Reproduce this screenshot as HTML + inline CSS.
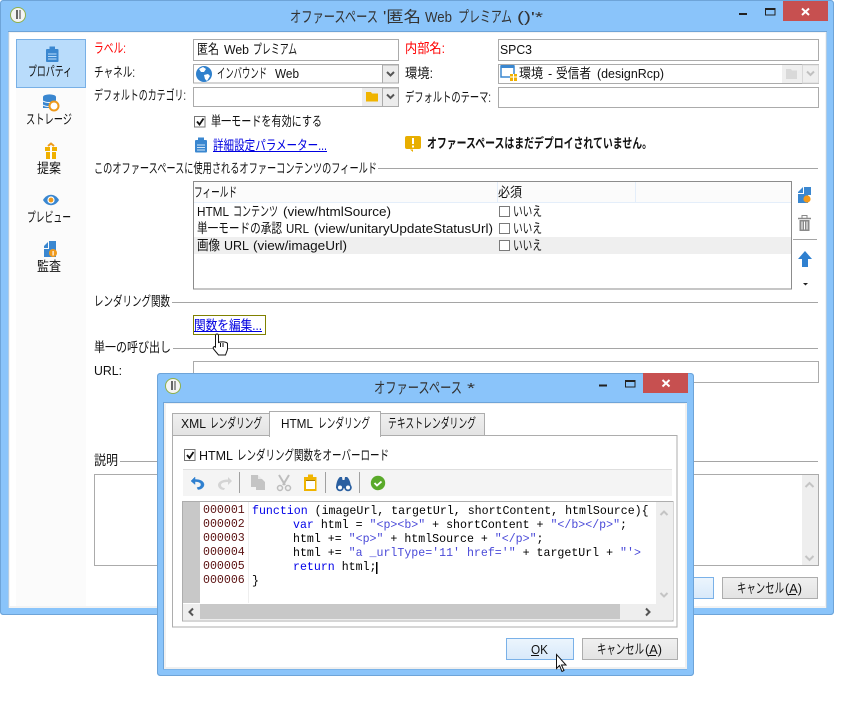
<!DOCTYPE html>
<html><head><meta charset="utf-8">
<style>
html,body{margin:0;padding:0;background:#fff;width:850px;height:701px;overflow:hidden}
svg{display:block;position:absolute;left:0;top:0}
text{font-family:"Liberation Sans","Noto Sans CJK JP",sans-serif;font-size:13.5px;fill:#111;white-space:pre}
.l{font-size:12.5px}
.m{font-family:"Liberation Mono",monospace;font-size:11.6px;fill:#000}
.n{font-family:"Liberation Mono",monospace;font-size:11.6px;fill:#5a1010}
.k{fill:#0000e8}.s{fill:#4a4ad8}
.ti{font-size:15.5px;fill:#333}
.tl{font-size:14.5px;fill:#333}
.inp{fill:#fff;stroke:#ababab;stroke-width:1}
.ln{stroke:#a5a5a5;stroke-width:1}
.btn{stroke:#adadad;stroke-width:1}
</style></head><body>
<svg width="850" height="701" viewBox="0 0 850 701" xmlns="http://www.w3.org/2000/svg">
<defs>
<linearGradient id="g1" x1="0" y1="0" x2="0" y2="1"><stop offset="0" stop-color="#f0f0f0"/><stop offset="1" stop-color="#e3e3e3"/></linearGradient>
<linearGradient id="g2" x1="0" y1="0" x2="0" y2="1"><stop offset="0" stop-color="#ecf5fd"/><stop offset="1" stop-color="#d8e9fa"/></linearGradient>
</defs>
<!-- main window -->
<rect x="0" y="0" width="834" height="615" rx="3" fill="#8ac4fa"/>
<rect x="0.5" y="0.5" width="833" height="614" rx="3" fill="none" stroke="#6ea4d8"/>
<rect x="8" y="31" width="819" height="577" fill="#6ea4d8"/>
<rect x="8.5" y="32" width="818" height="576" fill="#f3f3f3"/>
<rect x="10" y="33" width="815" height="573" fill="#fff"/>
<rect x="16" y="39" width="70" height="567" fill="#fbfbfb"/>
<rect x="16.5" y="39.5" width="69" height="48" fill="#b9dcfb" stroke="#78b0e6"/>
<!-- titlebar -->
<circle cx="18" cy="15" r="7.5" fill="#f4f4f4" stroke="#8fb04a"/>
<rect x="16" y="10" width="2" height="9" fill="#666"/><rect x="19" y="10" width="2" height="9" fill="#999"/>
<text class="ti" x="290" y="22" textLength="88" lengthAdjust="spacingAndGlyphs">オファースペース</text>
<text class="ti" x="383" y="22" textLength="38" lengthAdjust="spacingAndGlyphs">'匿名</text>
<text class="tl" x="425" y="22" textLength="27" lengthAdjust="spacingAndGlyphs">Web</text>
<text class="ti" x="458" y="22" textLength="54" lengthAdjust="spacingAndGlyphs">プレミアム</text>
<text class="tl" x="517" y="22" textLength="26" lengthAdjust="spacingAndGlyphs">()'*</text>
<rect x="739" y="13" width="8" height="2" fill="#222"/>
<rect x="765.5" y="8.5" width="9.5" height="6.5" fill="none" stroke="#222"/><rect x="765" y="8" width="10.5" height="2" fill="#222"/>
<rect x="783" y="1" width="45" height="20" fill="#c75050"/>
<path d="M802 8.500l7 6.500M809 8.500l-7 6.500" stroke="#fff" stroke-width="2"/>
<!-- sidebar -->
<g>
<rect x="46" y="49" width="12.500" height="13" rx="1" fill="#3a87d0"/><rect x="49.500" y="46.500" width="5.500" height="4" fill="#3a87d0"/>
<path d="M48 54h8.500M48 56.500h8.500M48 59h8.500" stroke="#b9dcfb"/>
<text x="28" y="76" textLength="44" lengthAdjust="spacingAndGlyphs">プロパティ</text>
<ellipse cx="49.500" cy="97" rx="6.500" ry="2.600" fill="#3a87d0"/><rect x="43" y="97" width="13" height="11" fill="#3a87d0"/><path d="M43 101c3 2 10 2 13 0M43 105c3 2 10 2 13 0" stroke="#fff" fill="none"/>
<circle cx="54" cy="106" r="4.500" fill="#fff" stroke="#ee9a1c" stroke-width="2"/>
<text x="26" y="124" textLength="46" lengthAdjust="spacingAndGlyphs">ストレージ</text>
<rect x="45" y="147" width="12" height="4" fill="#f0b000"/><rect x="46" y="152" width="10" height="7" fill="#f0b000"/><rect x="50" y="147" width="2" height="12" fill="#fff"/><path d="M48 146l3-2.500 3 2.500" fill="none" stroke="#ee9a1c" stroke-width="2"/>
<text x="37" y="173" textLength="24" lengthAdjust="spacingAndGlyphs">提案</text>
<path d="M43 200c4-7 12-7 16 0c-4 7-12 7-16 0z" fill="#3a87d0"/><circle cx="51" cy="200" r="3.600" fill="#fff"/><circle cx="51" cy="200" r="2.400" fill="#f09a1c"/>
<text x="27" y="222" textLength="44" lengthAdjust="spacingAndGlyphs">プレビュー</text>
<path d="M44 246l4-4v6h-4zM49 241h7v16h-12v-8h5z" fill="#3a87d0"/><circle cx="53" cy="253" r="4" fill="#f09a1c"/><rect x="52.500" y="251" width="1.200" height="4.500" fill="#fff"/>
<text x="37" y="271" textLength="24" lengthAdjust="spacingAndGlyphs">監査</text>
</g>
<!-- form left -->
<text x="94" y="53" textLength="32" lengthAdjust="spacingAndGlyphs" style="fill:#f00">ラベル:</text>
<text x="94" y="77" textLength="41" lengthAdjust="spacingAndGlyphs">チャネル:</text>
<text x="94" y="100" textLength="92" lengthAdjust="spacingAndGlyphs">デフォルトのカテゴリ:</text>
<rect class="inp" x="193.500" y="39.500" width="205" height="21"/>
<text x="197" y="54" textLength="22" lengthAdjust="spacingAndGlyphs">匿名</text>
<text class="l" x="224" y="54" textLength="25" lengthAdjust="spacingAndGlyphs">Web</text>
<text x="253" y="54" textLength="44" lengthAdjust="spacingAndGlyphs">プレミアム</text>
<rect class="inp" x="193.500" y="64.500" width="205" height="18.500"/>
<rect x="382.500" y="65" width="16" height="18" fill="#ececec" stroke="#ababab"/>
<path d="M387 72l3.500 3.500 3.500-3.500" fill="none" stroke="#555" stroke-width="2"/>
<circle cx="204" cy="74" r="8" fill="#2f80cc"/><path d="M199 69l4-2 3 2-2 3-3 0zM204 75l4-1 2 2-3 5-2-2z" fill="#fff"/>
<text x="217" y="78" textLength="50" lengthAdjust="spacingAndGlyphs">インバウンド</text>
<text class="l" x="275" y="78" textLength="24" lengthAdjust="spacingAndGlyphs">Web</text>
<rect class="inp" x="193.500" y="87.500" width="205" height="19"/>
<rect x="362" y="88" width="20" height="18" fill="#ececec"/>
<rect x="382.500" y="88" width="16" height="18.500" fill="#ececec" stroke="#ababab"/>
<path d="M387 94.500l3.500 3.500 3.500-3.500" fill="none" stroke="#555" stroke-width="2"/>
<path d="M366 92h5l1 1.500h6v8h-12z" fill="#f0b400"/>
<rect x="194.500" y="116.500" width="10.500" height="10.500" fill="#fff" stroke="#777"/>
<path d="M197 121.500l2.500 3 4-6" fill="none" stroke="#111" stroke-width="1.800"/>
<text x="211" y="126" textLength="111" lengthAdjust="spacingAndGlyphs">単一モードを有効にする</text>
<rect x="195" y="140" width="12" height="12.500" rx="1" fill="#3a87d0"/><rect x="198" y="137.500" width="6" height="4" fill="#3a87d0"/><path d="M197 145h8M197 147.500h8M197 150h8" stroke="#cfe4f8"/>
<text x="213" y="150" textLength="114" lengthAdjust="spacingAndGlyphs" style="fill:#0000e0">詳細設定パラメーター...</text>
<rect x="213" y="151" width="114" height="1" fill="#0000e0"/>
<rect x="405" y="136" width="16" height="13" rx="2" fill="#e8ae00"/><path d="M410 149.500l3 2.500 0-2.500z" fill="#e8ae00"/><rect x="412" y="138" width="2" height="6" fill="#fff"/><rect x="412" y="145.500" width="2" height="2" fill="#fff"/>
<text x="427" y="148" textLength="225" lengthAdjust="spacingAndGlyphs" style="font-weight:bold">オファースペースはまだデプロイされていません。</text>
<!-- form right -->
<text x="405" y="53" textLength="40" lengthAdjust="spacingAndGlyphs" style="fill:#f00">内部名:</text>
<text x="405" y="78" textLength="28" lengthAdjust="spacingAndGlyphs">環境:</text>
<text x="405" y="102" textLength="86" lengthAdjust="spacingAndGlyphs">デフォルトのテーマ:</text>
<rect class="inp" x="498.500" y="39.500" width="320" height="21"/>
<text class="l" x="500" y="54" textLength="32" lengthAdjust="spacingAndGlyphs">SPC3</text>
<rect class="inp" x="498.500" y="64.500" width="320" height="19"/>
<rect x="782" y="65" width="20" height="18" fill="#efefef"/>
<rect x="802.500" y="65" width="16" height="18" fill="#efefef" stroke="#d8d8d8"/>
<path d="M807 71.500l3.500 3.500 3.500-3.500" fill="none" stroke="#c0c0c0" stroke-width="2"/>
<path d="M786 69h5l1 1.500h5v8.500h-11z" fill="#d9d9d9"/>
<rect x="501" y="66" width="13" height="11" fill="#fff" stroke="#3a87d0" stroke-width="1.500"/><rect x="501" y="65" width="13" height="3" fill="#3a87d0"/>
<rect x="510" y="74" width="7" height="7" fill="#f0b000"/><rect x="513" y="74" width="1" height="7" fill="#fff"/><rect x="510" y="76.500" width="7" height="1" fill="#fff"/>
<text x="519" y="78" textLength="24" lengthAdjust="spacingAndGlyphs">環境</text>
<text class="l" x="548" y="78">-</text>
<text x="556" y="78" textLength="35" lengthAdjust="spacingAndGlyphs">受信者</text>
<text class="l" x="597" y="78" textLength="67" lengthAdjust="spacingAndGlyphs">(designRcp)</text>
<rect class="inp" x="498.500" y="87.500" width="320" height="20"/>
<!-- section 1 -->
<text x="94" y="173" textLength="283" lengthAdjust="spacingAndGlyphs">このオファースペースに使用されるオファーコンテンツのフィールド</text>
<path class="ln" d="M378 168.500H818"/>
<rect x="193.500" y="181.500" width="598" height="107.500" fill="#fff" stroke="#8c8c8c"/>
<rect x="194" y="182" width="597" height="20" fill="#fbfbfb"/>
<path d="M194 202.500H791" stroke="#e4eefa"/><path d="M497.500 182V202M635.500 182V202" stroke="#e4eefa"/>
<text x="194" y="197" textLength="43" lengthAdjust="spacingAndGlyphs">フィールド</text>
<text x="498" y="197" textLength="24" lengthAdjust="spacingAndGlyphs">必須</text>
<rect x="194" y="237" width="597" height="17" fill="#efefef"/>
<text class="l" x="197" y="216" textLength="32" lengthAdjust="spacingAndGlyphs">HTML</text>
<text x="233" y="216" textLength="45" lengthAdjust="spacingAndGlyphs">コンテンツ</text>
<text class="l" x="283" y="216" textLength="108" lengthAdjust="spacingAndGlyphs">(view/htmlSource)</text>
<text x="197" y="233" textLength="85" lengthAdjust="spacingAndGlyphs">単一モードの承認</text>
<text class="l" x="286" y="233" textLength="23" lengthAdjust="spacingAndGlyphs">URL</text>
<text class="l" x="314" y="233" textLength="179" lengthAdjust="spacingAndGlyphs">(view/unitaryUpdateStatusUrl)</text>
<text x="197" y="250" textLength="23" lengthAdjust="spacingAndGlyphs">画像</text>
<text class="l" x="224" y="250" textLength="25" lengthAdjust="spacingAndGlyphs">URL</text>
<text class="l" x="253" y="250" textLength="94" lengthAdjust="spacingAndGlyphs">(view/imageUrl)</text>
<rect x="499.500" y="206.500" width="10" height="10" fill="#fff" stroke="#7a7a7a"/>
<rect x="499.500" y="223.500" width="10" height="10" fill="#fff" stroke="#7a7a7a"/>
<rect x="499.500" y="240.500" width="10" height="10" fill="#fff" stroke="#7a7a7a"/>
<text x="513" y="216" textLength="29" lengthAdjust="spacingAndGlyphs">いいえ</text>
<text x="513" y="233" textLength="29" lengthAdjust="spacingAndGlyphs">いいえ</text>
<text x="513" y="250" textLength="29" lengthAdjust="spacingAndGlyphs">いいえ</text>
<!-- right toolbar -->
<path d="M798 192l5-5v6h-5zM804 187h7v8h-3v8h-10v-9h6z" fill="#3a87d0"/><circle cx="807" cy="199" r="3.600" fill="#f59a1a"/>
<path d="M798 218.500h13" stroke="#8a8a8a" stroke-width="1.500"/><path d="M802 218v-2.500h5v2.500" fill="none" stroke="#8a8a8a"/><rect x="799.500" y="220" width="10" height="11" fill="#8a8a8a"/><path d="M802 221.500v8M804.500 221.500v8M807 221.500v8" stroke="#fff"/>
<path class="ln" d="M793 239.500H817"/>
<path d="M805 251l7 8h-4v8h-6v-8h-4z" fill="#2f80d0"/>
<path d="M803 283h5l-2.500 2.500z" fill="#222"/>
<!-- section 2 -->
<text x="94" y="306" textLength="76" lengthAdjust="spacingAndGlyphs">レンダリング関数</text>
<path class="ln" d="M172 302.500H818"/>
<rect x="193.500" y="315.500" width="72" height="19" fill="none" stroke="#ffff00"/>
<rect x="193.500" y="315.500" width="72" height="19" fill="none" stroke="#000" stroke-dasharray="1 1"/>
<text x="194" y="330" textLength="68" lengthAdjust="spacingAndGlyphs" style="fill:#0000e0">関数を編集...</text>
<rect x="194" y="331" width="68" height="1" fill="#0000e0"/>
<text x="94" y="352" textLength="77" lengthAdjust="spacingAndGlyphs">単一の呼び出し</text>
<path class="ln" d="M173 348.500H818"/>
<text class="l" x="94" y="375" textLength="28" lengthAdjust="spacingAndGlyphs">URL:</text>
<rect class="inp" x="193.500" y="361.500" width="625" height="21"/>
<text x="94" y="465" textLength="24" lengthAdjust="spacingAndGlyphs">説明</text>
<path class="ln" d="M120 461.500H818"/>
<rect class="inp" x="94.500" y="474.500" width="724" height="91"/>
<rect x="802" y="475" width="16" height="90" fill="#eee"/>
<path d="M805.500 487l4-4 4 4" fill="none" stroke="#c4c4c4" stroke-width="2"/>
<path d="M805.500 556l4 4 4-4" fill="none" stroke="#c4c4c4" stroke-width="2"/>
<rect x="640.500" y="577.500" width="73" height="21" fill="url(#g2)" stroke="#7ab1e8"/>
<rect x="722.500" y="577.500" width="95" height="21" fill="url(#g1)" class="btn"/>
<text x="737" y="593" textLength="47" lengthAdjust="spacingAndGlyphs">キャンセル</text>
<text class="l" x="785" y="593" textLength="17" lengthAdjust="spacingAndGlyphs">(A)</text>
<rect x="788" y="594" width="8" height="1" fill="#111"/>
<!-- hand cursor -->
<path d="M215.500 335.500c0-2 3-2 3 0v7c2-1 8-1 9 1v6l-2 5.500h-7l-5-6c-1-2 1-3 2-2z" fill="#fff" stroke="#111"/>
<path d="M220.500 343v4M223 343v4" stroke="#111"/>
<!-- dialog -->
<rect x="157" y="373" width="537" height="303" rx="3" fill="#8ac4fa"/>
<rect x="157.500" y="373.500" width="536" height="302" rx="3" fill="none" stroke="#6ea4d8"/>
<rect x="163" y="402" width="524" height="267.500" fill="#6ea4d8"/>
<rect x="164" y="403" width="523" height="266" fill="#f0f0f0"/>
<rect x="166" y="404" width="519" height="263" fill="#fff"/>
<circle cx="173" cy="386" r="7.500" fill="#f4f4f4" stroke="#8fb04a"/>
<rect x="171" y="381" width="2" height="9" fill="#666"/><rect x="174" y="381" width="2" height="9" fill="#999"/>
<text class="ti" x="374" y="393" textLength="88" lengthAdjust="spacingAndGlyphs">オファースペース</text>
<text class="tl" x="467" y="393" textLength="8" lengthAdjust="spacingAndGlyphs">*</text>
<rect x="599" y="384.500" width="8" height="2" fill="#222"/>
<rect x="625.500" y="380.500" width="9.500" height="6.500" fill="none" stroke="#222"/><rect x="625" y="380" width="10.500" height="2" fill="#222"/>
<rect x="643" y="373" width="45" height="20" fill="#c75050"/>
<path d="M662.500 380l7 6.500M669.500 380l-7 6.500" stroke="#fff" stroke-width="2"/>
<!-- tabs -->
<rect x="172.500" y="435.500" width="504.500" height="191.500" fill="#fff" stroke="#adadad"/>
<rect x="172.500" y="413.500" width="97" height="22" fill="url(#g1)" stroke="#adadad"/>
<rect x="380.500" y="413.500" width="104" height="22" fill="url(#g1)" stroke="#adadad"/>
<rect x="269.500" y="411.500" width="111" height="25" fill="#fff" stroke="#adadad"/>
<rect x="270" y="434" width="110" height="4" fill="#fff"/>
<text class="l" x="181" y="428" textLength="25" lengthAdjust="spacingAndGlyphs">XML</text>
<text x="210" y="428" textLength="52" lengthAdjust="spacingAndGlyphs">レンダリング</text>
<text class="l" x="281" y="428" textLength="32" lengthAdjust="spacingAndGlyphs">HTML</text>
<text x="318" y="428" textLength="52" lengthAdjust="spacingAndGlyphs">レンダリング</text>
<text x="388" y="428" textLength="88" lengthAdjust="spacingAndGlyphs">テキストレンダリング</text>
<rect x="184.500" y="449.500" width="10.500" height="11" fill="#fff" stroke="#777"/>
<path d="M187 455l2.500 3 4-6" fill="none" stroke="#111" stroke-width="1.800"/>
<text class="l" x="199" y="460" textLength="34" lengthAdjust="spacingAndGlyphs">HTML</text>
<text x="237" y="460" textLength="152" lengthAdjust="spacingAndGlyphs">レンダリング関数をオーバーロード</text>
<!-- toolbar -->
<rect x="183" y="469" width="489" height="27" fill="#f4f4f4"/>
<path d="M183 469.500H672" stroke="#dedede"/>
<path d="M191 481l4-4v2.500c7 0 9 3 9 5c0 3-3 5-6 5l-1-2c2 0 4-1 4-3c0-1.500-2-3-6-3v3z" fill="#2f80d0" stroke="#2f80d0" stroke-width=".5"/>
<path d="M232 481l-4-4v2.500c-7 0-10 3-10 5.500c0 3 3 5 6 5l1-2c-2 0-4-1-4-3c0-2 3-3 7-3v3z" fill="#d4d4d4"/>
<path d="M239.500 472V493M325.500 472V493M359.500 472V493" stroke="#a0a0a0"/>
<path d="M251 475h7v4h4l3 3v8h-9v-3h-5z" fill="#c4c4c4"/><path d="M258 475l4 4h-4z" fill="#e8e8e8"/>
<path d="M279 475l6 10M289 475l-6 10" stroke="#bdbdbd" stroke-width="2"/><circle cx="280" cy="488" r="2.500" fill="none" stroke="#bdbdbd" stroke-width="1.500"/><circle cx="288" cy="488" r="2.500" fill="none" stroke="#bdbdbd" stroke-width="1.500"/>
<rect x="304" y="477" width="12.500" height="14" fill="#f0b400"/><rect x="308" y="474.500" width="5" height="4" fill="#f0b400"/><rect x="306" y="481" width="9" height="8" fill="#fff"/><rect x="306" y="480" width="9" height="1" fill="#a87a00"/>
<path d="M336 488c0-5 2-10 4-11h2l.5 3h2l.5-3h2c2 1 4 6 4 11z" fill="#2a5fa0"/><circle cx="340" cy="487.500" r="3.800" fill="#2a5fa0"/><circle cx="348" cy="487.500" r="3.800" fill="#2a5fa0"/><circle cx="340" cy="487.500" r="2" fill="#fff"/><circle cx="348" cy="487.500" r="2" fill="#fff"/>
<circle cx="378" cy="483" r="7.200" fill="#5aaa2a"/><path d="M374.500 483l2.500 2.500 4.500-4" fill="none" stroke="#fff" stroke-width="1.800"/>
<!-- editor -->
<rect x="182.500" y="501.500" width="490.500" height="119.500" fill="#fff" stroke="#adadad"/>
<rect x="183" y="502" width="17" height="101" fill="#c8c8c8"/>
<path d="M248.500 502V603" stroke="#eeeeee"/>
<rect x="656" y="502" width="17" height="102" fill="#eee"/>
<rect x="183" y="604" width="490" height="16" fill="#eee"/>
<rect x="200" y="604" width="420" height="15" fill="#c8c8c8"/>
<path d="M660.500 515l3.500-3.500 3.500 3.500" fill="none" stroke="#c4c4c4" stroke-width="2"/>
<path d="M660.500 593l3.500 3.500 3.500-3.500" fill="none" stroke="#c4c4c4" stroke-width="2"/>
<path d="M193 608.500l-3.500 3.500 3.500 3.500" fill="none" stroke="#555" stroke-width="2"/>
<path d="M646 608.500l3.500 3.500-3.500 3.500" fill="none" stroke="#555" stroke-width="2"/>
<text class="n" x="203" y="513">000001</text>
<text class="n" x="203" y="527">000002</text>
<text class="n" x="203" y="541">000003</text>
<text class="n" x="203" y="555">000004</text>
<text class="n" x="203" y="569">000005</text>
<text class="n" x="203" y="583">000006</text>
<text class="m" x="252" y="514"><tspan class="k">function</tspan> (imageUrl, targetUrl, shortContent, htmlSource){</text>
<text class="m" x="293" y="528"><tspan class="k">var</tspan> html = <tspan class="s">"&lt;p&gt;&lt;b&gt;"</tspan> + shortContent + <tspan class="s">"&lt;/b&gt;&lt;/p&gt;"</tspan>;</text>
<text class="m" x="293" y="542">html += <tspan class="s">"&lt;p&gt;"</tspan> + htmlSource + <tspan class="s">"&lt;/p&gt;"</tspan>;</text>
<text class="m" x="293" y="556">html += <tspan class="s">"a _urlType='11' href='"</tspan> + targetUrl + <tspan class="s">"'&gt;</tspan></text>
<text class="m" x="293" y="570"><tspan class="k">return</tspan> html;</text>
<text class="m" x="252" y="584">}</text>
<rect x="376" y="562" width="1.500" height="12" fill="#000"/>
<!-- dialog buttons -->
<rect x="506.500" y="638.500" width="67" height="21" fill="url(#g2)" stroke="#7ab1e8"/>
<text class="l" x="531" y="654" textLength="17" lengthAdjust="spacingAndGlyphs">OK</text>
<rect x="531" y="655" width="8" height="1" fill="#111"/>
<rect x="582.500" y="638.500" width="95" height="21" fill="url(#g1)" class="btn"/>
<text x="597" y="654" textLength="47" lengthAdjust="spacingAndGlyphs">キャンセル</text>
<text class="l" x="645" y="654" textLength="17" lengthAdjust="spacingAndGlyphs">(A)</text>
<rect x="648" y="655" width="8" height="1" fill="#111"/>
<!-- arrow cursor -->
<path d="M556.500 654.500v14l3-3 2.500 6 2-1-2.500-5.500h4.500z" fill="#fff" stroke="#111"/>
</svg>
</body></html>
